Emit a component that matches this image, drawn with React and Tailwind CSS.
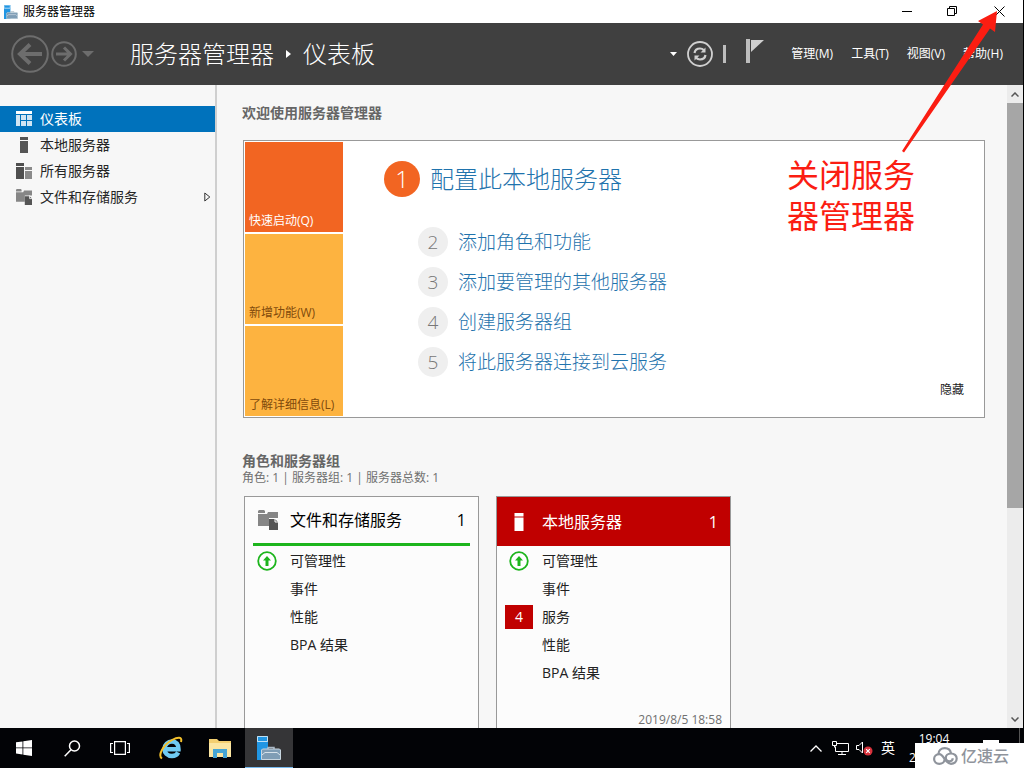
const navItems = [
    { label: "仪表板", icon: DashboardIcon, active: true },
    { label: "本地服务器", icon: ServerIcon },
    { label: "所有服务器", icon: ServersIcon },
    { label: "文件和存储服务", icon: StorageIcon, expandable: true },
]

const tiles = [
    { label: "快速启动(Q)", className: "bg-[#f26522] text-white" },
    { label: "新增功能(W)", className: "bg-[#fdb340] text-[#7f4a0c]" },
    { label: "了解详细信息(L)", className: "bg-[#fdb340] text-[#7f4a0c]" },
]

const steps = ["添加角色和功能", "添加要管理的其他服务器", "创建服务器组", "将此服务器连接到云服务"]

const menus = ["管理(M)", "工具(T)", "视图(V)", "帮助(H)"]

/* Icons */
function DashboardIcon() {
    return (
        <svg width="16" height="16" viewBox="0 0 16 16" fill="#fff">
            <path d="M0 0h16v3H0z" />
            <path d="M0 4h4v11H0zM5 4h5v5H5zM11 4h5v5h-5zM5 10h5v5H5zM11 10h5v5h-5z" opacity=".82" />
        </svg>
    )
}

function ServerIcon({ className = "text-[#555]", size = 16 }) {
    return (
        <svg width={size} height={size} viewBox="0 0 16 16" fill="currentColor" className={className}>
            <path d="M4 0h8v3H4zM4 4h8v12H4z" />
        </svg>
    )
}

function ServersIcon() {
    return (
        <svg width="16" height="16" viewBox="0 0 16 16">
            <path d="M0 0h8v3H0zM0 4h8v12H0z" fill="#4f4f4f" />
            <path d="M9 4h7v3H9zM9 8h7v8H9z" fill="#8a8a8a" />
        </svg>
    )
}

function StorageIcon({ size = 16 }) {
    return (
        <svg width={size} height={size} viewBox="0 0 20 20">
            <path d="M0 1l1-1h5l1 1v2H0zM0 4h9l1-2h10v6h-9v8H0z" fill="#868686" />
            <path d="M11 9h6l3 3v8h-9z" fill="#555" />
            <path d="M17 8v4h3" fill="none" stroke="#fff" />
        </svg>
    )
}

function AppIcon({ size }) {
    return (
        <svg width={size} height={size} viewBox="0 0 24 24">
            <path d="M0 0h11v24H0z" fill="#2196e3" />
            <path d="M.5.500h10V5.500H.5zM.5 5.500h10" fill="none" stroke="#bfe0f5" />
            <path d="M11 13v-1.500h6V13" fill="none" stroke="#aab9c6" strokeWidth="1.500" />
            <path d="M4.500 14l1-1h17l1 1v9.500h-19z" fill="#7f9db5" stroke="#c7d5df" />
            <path d="M5 19l3-2.500h12l3 2.500" fill="none" stroke="#d7e2ea" />
        </svg>
    )
}

function HealthyIcon() {
    return (
        <svg width="20" height="20" viewBox="0 0 20 20">
            <circle cx="10" cy="10" r="8.800" fill="#fff" stroke="#1db51d" strokeWidth="1.800" />
            <path d="M10 5l4 4.500h-2.500V15h-3V9.500H6z" fill="#1db51d" />
        </svg>
    )
}

function TitleBar() {
    return (
        <div className="h-[23px] shrink-0 bg-white flex items-center pl-1">
            <AppIcon size={14} />
            <h1 className="ml-[5px] flex-1 text-xs leading-4 text-black">服务器管理器</h1>
            <div className="flex h-full">
                <button aria-label="最小化" className="w-[45px] flex items-center justify-center">
                    <svg width="11" height="11" viewBox="0 0 11 11"><path d="M0 5.500h10" stroke="#000" /></svg>
                </button>
                <button aria-label="还原" className="w-[45px] flex items-center justify-center">
                    <svg width="11" height="11" viewBox="0 0 11 11" fill="none" stroke="#000">
                        <path d="M.5 2.500h7v7h-7zM2.500 2.500v-2h7v7h-2" />
                    </svg>
                </button>
                <button aria-label="关闭" className="w-[48px] flex items-center justify-center">
                    <svg width="11" height="11" viewBox="0 0 11 11"><path d="M.5.5l10 10M10.500.5l-10 10" stroke="#000" /></svg>
                </button>
            </div>
        </div>
    )
}

function Header() {
    return (
        <header className="h-[62px] shrink-0 bg-[#404040] text-white flex items-center pl-[11px] pr-5">
            <div className="flex items-center text-[#6d6d6d]">
                <button aria-label="后退">
                    <svg width="38" height="38" viewBox="0 0 38 38" fill="none" stroke="currentColor">
                        <circle cx="19" cy="19" r="17.800" strokeWidth="2" />
                        <path d="M31 19H10M19 9.500L9 19l10 9.500" strokeWidth="4" />
                    </svg>
                </button>
                <button aria-label="前进" className="ml-0.5">
                    <svg width="26" height="26" viewBox="0 0 26 26" fill="none" stroke="currentColor">
                        <circle cx="13" cy="13" r="11.800" strokeWidth="2" />
                        <path d="M5 13h14M13 6.500l6.500 6.500-6.500 6.500" strokeWidth="3" />
                    </svg>
                </button>
                <button aria-label="历史记录" className="ml-[5px]">
                    <svg width="12" height="6" viewBox="0 0 12 6" fill="currentColor"><path d="M0 0h12L6 6z" /></svg>
                </button>
            </div>
            <nav className="ml-9 flex items-center text-2xl font-light leading-8">
                <span>服务器管理器</span>
                <svg width="5" height="8" viewBox="0 0 5 8" className="mx-3" fill="#fff"><path d="M0 0l5 4-5 4z" /></svg>
                <span>仪表板</span>
            </nav>
            <div className="ml-auto flex items-center">
                <button aria-label="通知列表">
                    <svg width="7" height="4" viewBox="0 0 7 4" fill="#fff"><path d="M0 0h7L3.500 4z" /></svg>
                </button>
                <button aria-label="刷新" className="ml-2.5">
                    <svg width="26" height="26" viewBox="0 0 26 26" fill="none" stroke="#d0d0d0">
                        <circle cx="13" cy="13" r="12" strokeWidth="1.800" />
                        <path d="M7.500 12c.5-3 3-4.500 5.500-4.500 1.800 0 3 .8 4 1.800M18.500 14c-.5 3-3 4.500-5.500 4.500-1.800 0-3-.8-4-1.800" strokeWidth="2.200" />
                        <path d="M18.500 6.500v5h-5zM7.500 19.500v-5h5z" fill="#d0d0d0" stroke="none" />
                    </svg>
                </button>
                <div className="ml-2.5 w-[3px] h-[18px] bg-[#bdbdbd]" />
                <button aria-label="通知" className="ml-5 mb-1.5">
                    <svg width="18" height="24" viewBox="0 0 18 24" fill="#d0d0d0">
                        <path d="M0 0h4v24H0z" fill="#bdbdbd" />
                        <path d="M5 1h13L5 13z" />
                    </svg>
                </button>
                <div className="ml-[27px] flex gap-[18px] text-xs leading-4">
                    {menus.map(m => <button key={m}>{m}</button>)}
                </div>
            </div>
        </header>
    )
}

function Sidebar() {
    return (
        <aside className="w-[217px] shrink-0 border-r-2 border-[#cfcfcf] pt-[21px]">
            {navItems.map(({ label, icon: Icon, active, expandable }) => (
                <a
                    key={label}
                    href="#"
                    className={`h-[26px] flex items-center gap-2 pl-4 pr-1 text-sm leading-5 ${active ? "bg-[#0072bc] text-white" : "text-[#262626]"}`}
                >
                    <Icon />
                    <span className="flex-1">{label}</span>
                    {expandable && (
                        <svg width="7" height="10" viewBox="0 0 7 10" fill="none" stroke="#333"><path d="M.8 1l5 4-5 4z" /></svg>
                    )}
                </a>
            ))}
        </aside>
    )
}

function Welcome() {
    return (
        <section>
            <h2 className="text-sm leading-5 font-bold text-[#666]">欢迎使用服务器管理器</h2>
            <div className="mt-[17px] ml-px flex border border-[#999] bg-white p-px">
                <div className="w-[98px] shrink-0 flex flex-col gap-0.5">
                    {tiles.map(t => (
                        <button key={t.label} className={`h-[90px] flex items-end px-1 pb-[3px] text-xs leading-4 text-left whitespace-nowrap ${t.className}`}>
                            {t.label}
                        </button>
                    ))}
                </div>
                <div className="flex-1 flex flex-col pl-[41px] pr-[19px] pt-[19px] pb-[18px]">
                    <a href="#" className="flex items-center gap-2.5 text-2xl leading-9 font-light text-[#1f73ad]">
                        <span className="size-9 rounded-full bg-[#f26522] text-white text-center">1</span>
                        配置此本地服务器
                    </a>
                    <ol className="mt-[25px] ml-[34px]">
                        {steps.map((s, i) => (
                            <li key={s}>
                                <a href="#" className="h-10 flex items-center gap-2.5 text-[19px] leading-[30px] font-light text-[#1f73ad]">
                                    <span className="size-[30px] rounded-full bg-[#efefef] text-[#777] text-center">{i + 2}</span>
                                    {s}
                                </a>
                            </li>
                        ))}
                    </ol>
                    <button className="mt-auto self-end text-xs leading-4 text-[#222]">隐藏</button>
                </div>
            </div>
        </section>
    )
}

function CardRow({ label, children }) {
    return (
        <li className="h-7 flex items-center">
            <span className="w-7 mr-[9px] flex justify-center">{children}</span>
            {label}
        </li>
    )
}

function StorageCard() {
    return (
        <article className="w-[235px] h-60 border border-[#999] bg-[#fcfcfc] px-2 flex flex-col">
            <div className="h-[49px] flex items-center pl-[5px] pr-1 border-b-[3px] border-[#1db51d] text-black">
                <StorageIcon size={20} />
                <h3 className="ml-3 flex-1 text-base leading-6">文件和存储服务</h3>
                <span className="text-base leading-6">1</span>
            </div>
            <ul className="pt-px text-sm leading-5 text-[#222]">
                <CardRow label="可管理性"><HealthyIcon /></CardRow>
                <CardRow label="事件" />
                <CardRow label="性能" />
                <CardRow label="BPA 结果" />
            </ul>
        </article>
    )
}

function LocalServerCard() {
    return (
        <article className="w-[235px] h-60 border border-[#999] bg-[#fcfcfc] flex flex-col">
            <div className="h-[49px] flex items-center pl-[13px] pr-3 bg-[#c00000] text-white">
                <ServerIcon className="text-white" size={18} />
                <h3 className="ml-3.5 flex-1 text-base leading-6">本地服务器</h3>
                <span className="text-base leading-6">1</span>
            </div>
            <ul className="px-2 pt-px text-sm leading-5 text-[#222]">
                <CardRow label="可管理性"><HealthyIcon /></CardRow>
                <CardRow label="事件" />
                <CardRow label="服务">
                    <span className="w-7 h-6 leading-6 bg-[#c00000] text-white text-center">4</span>
                </CardRow>
                <CardRow label="性能" />
                <CardRow label="BPA 结果" />
            </ul>
            <time className="mt-auto pr-2 pb-2 text-xs leading-[14px] text-right text-[#707070]">2019/8/5 18:58</time>
        </article>
    )
}

function Scrollbar() {
    return (
        <div className="w-4 shrink-0 flex flex-col bg-[#ececec]">
            <button aria-label="向上滚动" className="h-[18px] flex items-center justify-center">
                <svg width="8" height="5" viewBox="0 0 8 5" fill="none" stroke="#555" strokeWidth="1.500"><path d="M.5 4.500L4 1l3.500 3.500" /></svg>
            </button>
            <div className="flex-1"><div className="h-2/3 bg-[#a6a6a6]" /></div>
            <button aria-label="向下滚动" className="h-[17px] flex items-center justify-center">
                <svg width="8" height="5" viewBox="0 0 8 5" fill="none" stroke="#555" strokeWidth="1.500"><path d="M.5.5L4 4 7.500.5" /></svg>
            </button>
        </div>
    )
}

function Annotation() {
    return (
        <>
            <svg width="130" height="156" viewBox="0 0 130 156" className="absolute top-0 right-0 pointer-events-none">
                <path d="M103 11L84 21l5 3.500L8 151l2 1.500L96 28.500l5 3.500z" fill="#fb1d12" />
            </svg>
            <p className="absolute top-[154px] right-[109px] w-32 text-[32px] leading-[41px] text-[#fb1d12]">关闭服务器管理器</p>
        </>
    )
}

function Taskbar() {
    return (
        <footer className="relative h-10 shrink-0 bg-[#020306] text-white flex">
            <div className="flex">
                <button aria-label="开始" className="w-12 flex items-center justify-center">
                    <svg width="16" height="16" viewBox="0 0 16 16" fill="#fff"><path d="M0 2.300l6.500-.9v6.100H0zM7.300 1.200L16 0v7.500H7.300zM0 8.300h6.500v6.100L0 13.500zM7.300 8.300H16V16l-8.700-1.300z" /></svg>
                </button>
                <button aria-label="搜索" className="w-12 flex items-center justify-center">
                    <svg width="17" height="17" viewBox="0 0 17 17" fill="none" stroke="#fff" strokeWidth="1.500"><circle cx="10.500" cy="6" r="5" /><path d="M7 9.700L.7 16.200" /></svg>
                </button>
                <button aria-label="任务视图" className="w-12 flex items-center justify-center">
                    <svg width="20" height="14" viewBox="0 0 20 14" fill="none" stroke="#fff" strokeWidth="1.200"><path d="M4.600.6h10.800v12.800H4.600zM3 2.500H.6v9H3M17 2.500h2.400v9H17" /></svg>
                </button>
            </div>
            <div className="ml-[3px] flex gap-px">
                <button aria-label="Internet Explorer" className="w-12 flex items-center justify-center">
                    <svg width="24" height="24" viewBox="0 0 24 24" fill="none">
                        <path d="M6 13.200h13.500C19.700 8.500 17 5.500 13 5.500s-7.500 3-7.500 7.200 3 7.300 7.500 7.300c3 0 5-1.200 6.200-3.500" stroke="#6fcbf3" strokeWidth="4.500" />
                        <path d="M3 22.500C-1.500 19.500 4 9 13 4 19 .7 23.500.5 22 6" stroke="#f4c12c" strokeWidth="2" />
                    </svg>
                </button>
                <button aria-label="文件资源管理器" className="w-12 flex items-center justify-center">
                    <svg width="22" height="19" viewBox="0 0 22 19">
                        <path d="M0 0h8l2 2h12v16H0z" fill="#f3cf70" />
                        <path d="M0 4h22v14H0z" fill="#fbe6a2" />
                        <path d="M4 19v-9h14v9h-4v-5H8v5z" fill="#45a5d4" />
                    </svg>
                </button>
                <button aria-label="服务器管理器" className="w-12 flex items-center justify-center bg-[#353537] border-b border-[#76b9ed]">
                    <AppIcon size={24} />
                </button>
            </div>
            <div className="ml-auto flex items-center">
                <button aria-label="显示隐藏的图标">
                    <svg width="12" height="7" viewBox="0 0 12 7" fill="none" stroke="#fff" strokeWidth="1.300"><path d="M.5 6.500L6 1l5.500 5.500" /></svg>
                </button>
                <svg width="17" height="15" viewBox="0 0 17 15" className="ml-2.5" fill="none" stroke="#fff">
                    <path d="M5 2.500h11.500v8H3.500v-5M10 10.500v3M6 13.500h8M.5.500h4v4h-4zM2.500 4.500v2" />
                </svg>
                <svg width="17" height="15" viewBox="0 0 17 15" className="ml-[7px]">
                    <path d="M.5 4.500H3l3.500-3.500v11L3 8.500H.5z" fill="none" stroke="#fff" />
                    <circle cx="12" cy="10" r="4.500" fill="#d9323c" />
                    <path d="M10.200 8.200l3.600 3.600M13.800 8.200l-3.600 3.600" stroke="#fff" strokeWidth="1.200" />
                </svg>
                <span className="ml-2 text-sm leading-5">英</span>
                <div className="ml-3.5 mr-6 text-center text-xs leading-[19px]">
                    <div>19:04</div>
                    <div>2019/8/5</div>
                </div>
                <svg width="16" height="16" viewBox="0 0 16 16" className="mr-5" fill="#fff"><path d="M0 0h16v12H9l-3 4v-4H0z" /></svg>
                <div className="h-full w-px mr-1 bg-[#555]" />
            </div>
            {/* Watermark */}
            <div className="absolute right-0 bottom-0 w-[109px] h-[25px] bg-white flex items-center pl-[18px] gap-[3px] text-[#8f949c]">
                <svg width="25" height="18" viewBox="0 0 25 18" fill="none" stroke="currentColor" strokeWidth="2.200">
                    <path d="M5.500 7C5.500 3.500 8 1.200 11.800 1.200c3.400 0 5.700 2 6.200 5.300" />
                    <path d="M11.500 12.500c0 2.500-2.500 4.300-5.200 4.300-3 0-5.200-2-5.200-4.800S3.300 7.200 6.300 7.200c4.700 0 5.700 9.600 11.700 9.600 3.300 0 5.700-2.200 5.700-5.200S21.300 6.500 18 6.500s-5.200 2-5.200 4.300 1.700 3.500 3.700 3.500 3.200-1.300 3.200-3" />
                </svg>
                <span className="text-base leading-6 font-medium">亿速云</span>
            </div>
        </footer>
    )
}

export default function App() {
    return (
        <div className="relative h-screen flex flex-col overflow-hidden bg-[#f7f7f7] font-['Open_Sans','Noto_Sans_CJK_SC',sans-serif]">
            <div className="flex-1 min-h-0 flex flex-col border-r border-black">
                <TitleBar />
                <Header />
                <div className="flex-1 min-h-0 flex">
                    <Sidebar />
                    <main className="flex-1 min-w-0 overflow-hidden pt-[18px] pl-[25px] pr-[22px]">
                        <Welcome />
                        <section className="mt-[34px]">
                            <h2 className="text-sm leading-[18px] font-bold text-[#666]">角色和服务器组</h2>
                            <p className="text-xs leading-4 text-[#707070]">角色: 1 | 服务器组: 1 | 服务器总数: 1</p>
                            <div className="mt-2.5 ml-0.5 flex gap-[17px]">
                                <StorageCard />
                                <LocalServerCard />
                            </div>
                        </section>
                    </main>
                    <Scrollbar />
                </div>
            </div>
            <Taskbar />
            <Annotation />
        </div>
    )
}
